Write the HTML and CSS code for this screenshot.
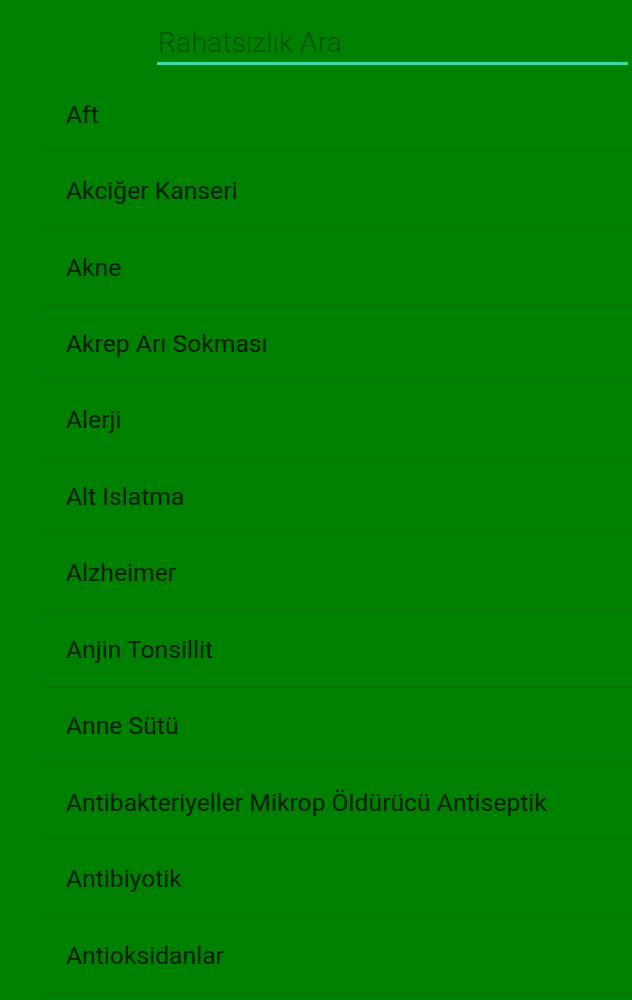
FILE: index.html
```html
<!DOCTYPE html>
<html lang="tr">
<head>
<meta charset="utf-8">
<title>Rahatsızlık Ara</title>
<link rel="stylesheet" href="styles.css">
</head>
<body>
<header class="search">
  <input class="search-input" type="text" placeholder="Rahatsızlık Ara">
</header>
<ul class="list">
  <li class="row">Aft</li>
  <li class="row">Akciğer Kanseri</li>
  <li class="row">Akne</li>
  <li class="row">Akrep Arı Sokması</li>
  <li class="row">Alerji</li>
  <li class="row">Alt Islatma</li>
  <li class="row">Alzheimer</li>
  <li class="row">Anjin Tonsillit</li>
  <li class="row">Anne Sütü</li>
  <li class="row">Antibakteriyeller Mikrop Öldürücü Antiseptik</li>
  <li class="row">Antibiyotik</li>
  <li class="row">Antioksidanlar</li>
</ul>
</body>
</html>
```

FILE: styles.css
```css
html, body {
  margin: 0;
  padding: 0;
  background: #008000;
  height: 100%;
  overflow: hidden;
}
body {
  font-family: Roboto, "Noto Sans", sans-serif;
}
.search {
  height: 75.5px;
  padding: 19px 4px 0 157px;
  box-sizing: border-box;
}
.search-input {
  display: block;
  width: 100%;
  box-sizing: border-box;
  height: 46px;
  margin: 0;
  padding: 4px 0 0 1px;
  border: 0;
  border-bottom: 3px solid #36e0a0;
  background: transparent;
  font-family: Roboto, sans-serif;
  font-size: 28.5px;
  font-weight: 300;
  color: #0a200a;
  outline: none;
}
.search-input::placeholder {
  color: #005400;
  opacity: 1;
}
.list {
  list-style: none;
  margin: 0 0 0 41px;
  padding: 0;
}
.row {
  height: 76.45px;
  box-sizing: border-box;
  border-bottom: 1px solid #007200;
  display: flex;
  align-items: center;
  padding: 2px 0 0 25px;
  font-size: 24.7px;
  color: #0a1f0a;
}
```
